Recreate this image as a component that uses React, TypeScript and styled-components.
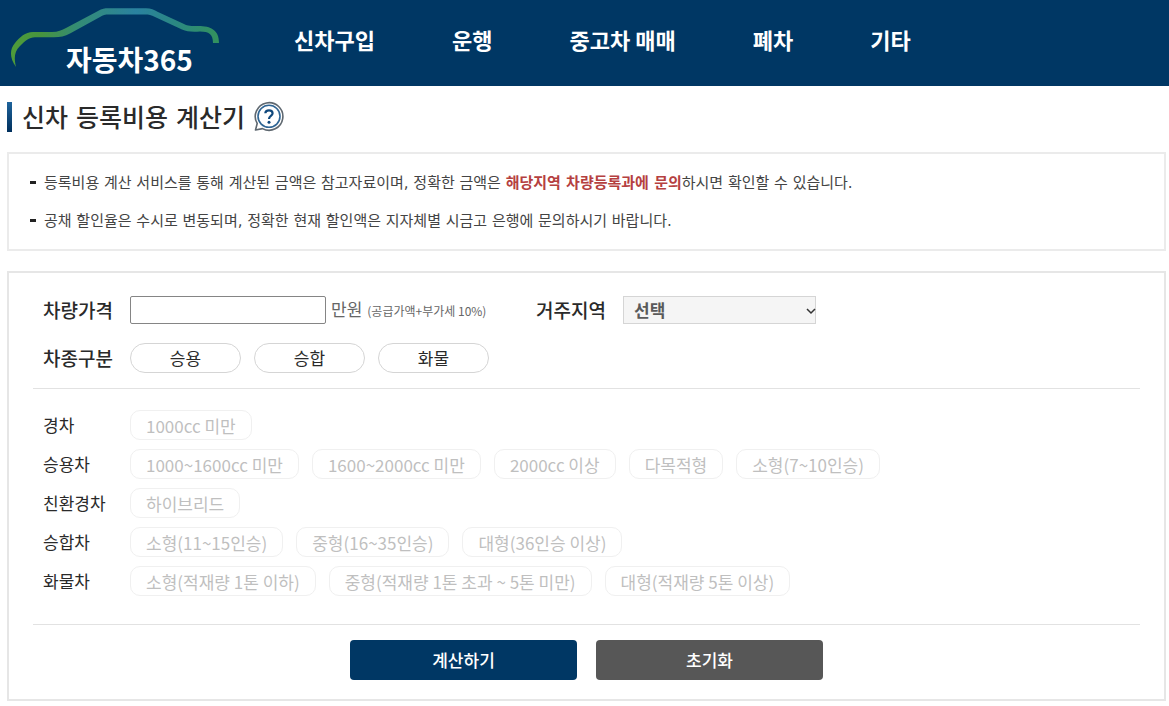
import React from "react";
import styled, { createGlobalStyle } from "styled-components";

const Global = createGlobalStyle`
  * { box-sizing: border-box; }
  body {
    margin: 0;
    background: #fff;
    color: #333;
    font-family: "Noto Sans CJK KR", "Noto Sans", sans-serif;
    font-size: 17px;
  }
  button, input, select { font-family: inherit; margin: 0; }
`;

const proseFont = `"DejaVu Sans", "Noto Sans CJK KR", sans-serif`;

const Header = styled.header`
  display: flex;
  align-items: center;
  height: 86px;
  padding-left: 10px;
  background: #003764;
`;

const Logo = styled.a`
  position: relative;
  display: block;
  flex: none;
  width: 210px;
  height: 86px;
  color: #fff;
  text-decoration: none;
  svg { display: block; }
`;

const LogoText = styled.span`
  position: absolute;
  left: 56px;
  top: 39px;
  font-size: 28px;
  font-weight: 700;
  line-height: 40px;
`;

const Nav = styled.nav`
  display: flex;
  gap: 77px;
  margin-left: 74px;
  padding-bottom: 8px;
`;

const NavLink = styled.a`
  color: #fff;
  font-size: 22px;
  font-weight: 700;
  line-height: 32px;
  text-decoration: none;
  white-space: nowrap;
`;

const Main = styled.main`
  padding: 16px 3px 4px 7px;
`;

const TitleRow = styled.div`
  display: flex;
  align-items: center;
  height: 30px;
`;

const TitleBar = styled.span`
  width: 5px;
  height: 30px;
  margin-right: 10px;
  background: linear-gradient(#1f649c, #002f5c);
`;

const Title = styled.h1`
  margin: 0;
  padding-top: 4px;
  color: #2a2a2a;
  font-family: ${proseFont};
  font-size: 25px;
  font-weight: 500;
  line-height: 30px;
`;

const HelpButton = styled.button`
  width: 32px;
  height: 32px;
  margin-left: 8px;
  padding: 0;
  border: 0;
  background: none;
  svg { display: block; }
`;

const Notice = styled.ul`
  display: flex;
  flex-direction: column;
  gap: 14px;
  margin: 20px 0;
  padding: 17px 21px 16px;
  border: 2px solid #ebebeb;
  list-style: none;
`;

const NoticeItem = styled.li`
  display: flex;
  align-items: center;
  gap: 8px;
  color: #444;
  font-family: ${proseFont};
  font-size: 15px;
  line-height: 24px;
  &::before {
    content: "";
    width: 6px;
    height: 3px;
    margin-bottom: 2px;
    background: #222;
  }
  strong { color: #b54040; }
`;

const Panel = styled.form`
  padding: 23px 24px 19px;
  border: 2px solid #e6e6e6;
`;

const Section = styled.section`
  display: flex;
  flex-direction: column;
  padding: 0 10px;
`;

const TopSection = styled(Section)`
  gap: 19px;
  padding-bottom: 15px;
`;

const OptionSection = styled(Section)`
  gap: 9px;
  padding-top: 21px;
  padding-bottom: 28px;
  border: solid #e2e2e2;
  border-width: 1px 0;
`;

const Row = styled.div`
  display: flex;
  align-items: center;
`;

const Label = styled.label`
  width: 87px;
  color: #2a2a2a;
  font-size: 19px;
  font-weight: 500;
  line-height: 28px;
`;

const Legend = styled.span<{ $strong?: boolean }>`
  flex: none;
  width: 87px;
  color: #2a2a2a;
  font-size: ${(p) => (p.$strong ? 19 : 17)}px;
  font-weight: ${(p) => (p.$strong ? 500 : 400)};
  line-height: 28px;
`;

const PriceInput = styled.input`
  width: 196px;
  height: 28px;
  padding: 0 8px;
  border: 1px solid #858585;
  border-radius: 2px;
  font-size: 17px;
`;

const Unit = styled.span`
  display: flex;
  align-items: baseline;
  gap: 5px;
  width: 205px;
  height: 28px;
  margin-left: 5px;
  color: #666;
  line-height: 26px;
  white-space: nowrap;
  small { font-size: 12px; }
`;

const SelectWrap = styled.span`
  position: relative;
  svg { position: absolute; right: 0; top: 11px; pointer-events: none; }
`;

const RegionSelect = styled.select`
  display: block;
  width: 193px;
  height: 28px;
  padding: 0 10px;
  border: 1px solid #d5d5d5;
  border-radius: 0;
  background: #f5f5f5;
  color: #5a5a5a;
  appearance: none;
  font-size: 17px;
  font-weight: 700;
  line-height: 26px;
`;

const Group = styled.div`
  display: flex;
  flex-wrap: wrap;
  gap: 9px 13px;
`;

const TypeButton = styled.button`
  width: 111px;
  height: 30px;
  padding: 0;
  border: 1px solid #d5d5d5;
  border-radius: 15px;
  background: #fff;
  color: #2a2a2a;
  font-size: 17px;
  line-height: 28px;
`;

const Chip = styled.button`
  height: 30px;
  padding: 1px 15px 0;
  border: 1px solid #f0f0f0;
  border-radius: 10px;
  background: #fff;
  color: #bfbfbf;
  font-size: 17px;
  line-height: 27px;
  white-space: nowrap;
`;

const Actions = styled.div`
  display: flex;
  justify-content: center;
  gap: 19px;
  padding-top: 15px;
`;

const ActionButton = styled.button<{ $primary?: boolean }>`
  width: 227px;
  height: 40px;
  padding: 0 0 2px;
  border: 0;
  border-radius: 4px;
  background: ${(p) => (p.$primary ? "#003764" : "#575757")};
  color: #fff;
  font-size: 17px;
  font-weight: 500;
`;

const menu = ["신차구입", "운행", "중고차 매매", "폐차", "기타"];
const types = ["승용", "승합", "화물"];
const options: [string, string[]][] = [
  ["경차", ["1000cc 미만"]],
  ["승용차", ["1000~1600cc 미만", "1600~2000cc 미만", "2000cc 이상", "다목적형", "소형(7~10인승)"]],
  ["친환경차", ["하이브리드"]],
  ["승합차", ["소형(11~15인승)", "중형(16~35인승)", "대형(36인승 이상)"]],
  ["화물차", ["소형(적재량 1톤 이하)", "중형(적재량 1톤 초과 ~ 5톤 미만)", "대형(적재량 5톤 이상)"]],
];

const CarOutline = () => (
  <svg width="210" height="86" viewBox="10 0 210 86" fill="none" aria-hidden="true">
    <defs>
      <linearGradient id="car" x1="10" y1="0" x2="220" y2="0" gradientUnits="userSpaceOnUse">
        <stop offset="0" stopColor="#4f9c3a" />
        <stop offset="0.15" stopColor="#47943f" />
        <stop offset="0.32" stopColor="#348c74" />
        <stop offset="0.6" stopColor="#2a82a0" />
        <stop offset="0.8" stopColor="#2b8880" />
        <stop offset="1" stopColor="#33925c" />
      </linearGradient>
    </defs>
    <path
      d="M16 67C10 59 9 50 15 43C20 37 25 32 33 32H52C58 32 62 30 66 28L98 11C102 8.500 105 8.300 108 8.300H146C151 8.300 154 10 158 12L184 24C188 26 191 26 198 26C211 26 219 30 219 43H213C213 34 209 31.500 200 31.500C191 32 187 31.500 182 29.500L155 17C151 15 149 14.500 145 14.500H109C105 14.500 103 15 100 17L70 33.500C65 36.500 60 37 54 37.300H35C29 37.300 25 41 20 46C14 52 14 58 16 67Z"
      fill="url(#car)"
    />
  </svg>
);

const HelpIcon = () => (
  <svg width="32" height="32" viewBox="0 0 32 32" fill="none" aria-hidden="true">
    <path d="M2.500 29L4.200 22.500A13.800 13.800 0 1 1 9.500 27.600Z" stroke="#5f6870" strokeWidth="1.600" strokeLinejoin="round" />
    <circle cx="16" cy="15.300" r="11" stroke="#2f6594" strokeWidth="1.600" />
    <path d="M12.300 12.300Q12.500 9.300 16 9.300T19.600 12.300C19.600 15 16 15 16 18" stroke="#10487c" strokeWidth="2.200" />
    <circle cx="16" cy="21.200" r="1.500" fill="#10487c" />
  </svg>
);

export default function App() {
  return (
    <>
      <Global />
      <Header>
        <Logo href="#">
          <CarOutline />
          <LogoText>자동차365</LogoText>
        </Logo>
        <Nav>
          {menu.map((m) => (
            <NavLink href="#" key={m}>{m}</NavLink>
          ))}
        </Nav>
      </Header>
      <Main>
        <TitleRow>
          <TitleBar />
          <Title>신차 등록비용 계산기</Title>
          <HelpButton type="button" aria-label="도움말"><HelpIcon /></HelpButton>
        </TitleRow>
        <Notice>
          <NoticeItem>
            <span>
              등록비용 계산 서비스를 통해 계산된 금액은 참고자료이며, 정확한 금액은 <strong>해당지역 차량등록과에 문의</strong>하시면 확인할 수 있습니다.
            </span>
          </NoticeItem>
          <NoticeItem>
            <span>공채 할인율은 수시로 변동되며, 정확한 현재 할인액은 지자체별 시금고 은행에 문의하시기 바랍니다.</span>
          </NoticeItem>
        </Notice>
        <Panel>
          <TopSection>
            <Row>
              <Label htmlFor="price">차량가격</Label>
              <PriceInput id="price" type="text" />
              <Unit>만원 <small>(공급가액+부가세 10%)</small></Unit>
              <Label htmlFor="region">거주지역</Label>
              <SelectWrap>
                <RegionSelect id="region"><option>선택</option></RegionSelect>
                <svg width="10" height="8" viewBox="0 0 10 8" fill="none" aria-hidden="true">
                  <path d="M1 2L5 6L9 2" stroke="#333" strokeWidth="1.500" />
                </svg>
              </SelectWrap>
            </Row>
            <Row>
              <Legend $strong>차종구분</Legend>
              <Group>
                {types.map((t) => (
                  <TypeButton type="button" key={t}>{t}</TypeButton>
                ))}
              </Group>
            </Row>
          </TopSection>
          <OptionSection>
            {options.map(([name, chips]) => (
              <Row key={name}>
                <Legend>{name}</Legend>
                <Group>
                  {chips.map((c) => (
                    <Chip type="button" disabled key={c}>{c}</Chip>
                  ))}
                </Group>
              </Row>
            ))}
          </OptionSection>
          <Actions>
            <ActionButton type="submit" $primary>계산하기</ActionButton>
            <ActionButton type="reset">초기화</ActionButton>
          </Actions>
        </Panel>
      </Main>
    </>
  );
}
